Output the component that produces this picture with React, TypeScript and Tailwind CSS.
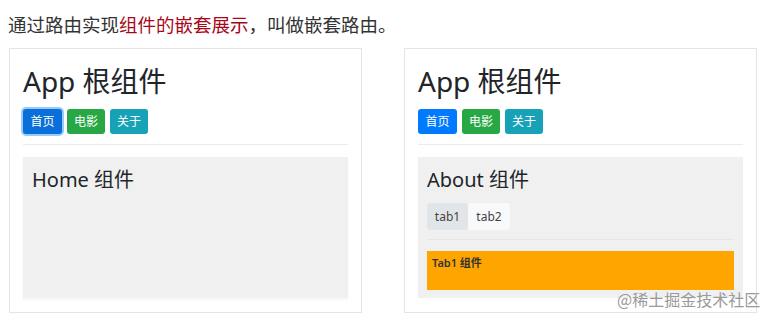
export default function App() {
  return (
    <div className="relative h-[320px] w-[772px] overflow-hidden bg-white font-['Noto_Sans','Noto_Sans_CJK_SC',sans-serif] text-[#212529]">
      <p className="pl-[8px] pt-[11px] text-[18.5px] leading-[27px] text-[#333]">
        通过路由实现<span className="text-[#a8071a]">组件的嵌套展示</span>，叫做嵌套路由。
      </p>
      <div className="mt-[10px] flex gap-[42px] pl-[9px]">
        <Card focused>
          <div className="mt-[12px] h-[141px] bg-[#f0f0f0] px-[9px] pt-[9px] shadow-[0_2px_3px_rgba(0,0,0,0.04)]">
            <h3 className="text-[20px] leading-[28px]">Home 组件</h3>
          </div>
        </Card>
        <Card>
          <div className="mt-[12px] h-[141px] bg-[#f0f0f0] px-[9px] pt-[9px]">
            <h3 className="text-[20px] leading-[28px]">About 组件</h3>
            <div className="mt-[9px] flex">
              <button className="h-[27px] w-[41px] rounded-[3px] bg-[#e2e5e8] text-[12px] text-[#444]">tab1</button>
              <button className="h-[27px] w-[42px] rounded-[3px] bg-[#f8f9fa] text-[12px] text-[#444]">tab2</button>
            </div>
            <hr className="mt-[9px] border-t border-[#e6e6e6]" />
            <div className="mt-[11px] h-[39px] bg-[#ffa500] px-[5px] pt-[4px] text-[11px] leading-[16px] font-semibold text-[#333]">
              Tab1 组件
            </div>
          </div>
        </Card>
      </div>
      <span className="absolute left-[617px] top-[288px] text-[16px] leading-[22px] text-[#9a9a9a] font-['Noto_Sans_CJK_SC',sans-serif]">
        @稀土掘金技术社区
      </span>
    </div>
  );
}

function Card({ children, focused }: { children: React.ReactNode; focused?: boolean }) {
  return (
    <div className="h-[265px] w-[353px] border border-[#e4e4e4] px-[13px] pt-[12px]">
      <h1 className="text-[28px] leading-[40px]">App 根组件</h1>
      <div className="mt-[8px] flex gap-[5px]">
        <button
          className={
            focused
              ? "h-[25px] w-[39px] rounded-[3px] bg-[#0a6fd8] text-[12px] text-white shadow-[0_0_0_2px_rgba(0,123,255,0.4)]"
              : "h-[25px] w-[39px] rounded-[3px] bg-[#007bff] text-[12px] text-white"
          }
        >
          首页
        </button>
        <button className="h-[25px] w-[38px] rounded-[3px] bg-[#28a745] text-[12px] text-white">电影</button>
        <button className="h-[25px] w-[38px] rounded-[3px] bg-[#17a2b8] text-[12px] text-white">关于</button>
      </div>
      <hr className="mt-[10px] border-t border-[#ebebeb]" />
      {children}
    </div>
  );
}
